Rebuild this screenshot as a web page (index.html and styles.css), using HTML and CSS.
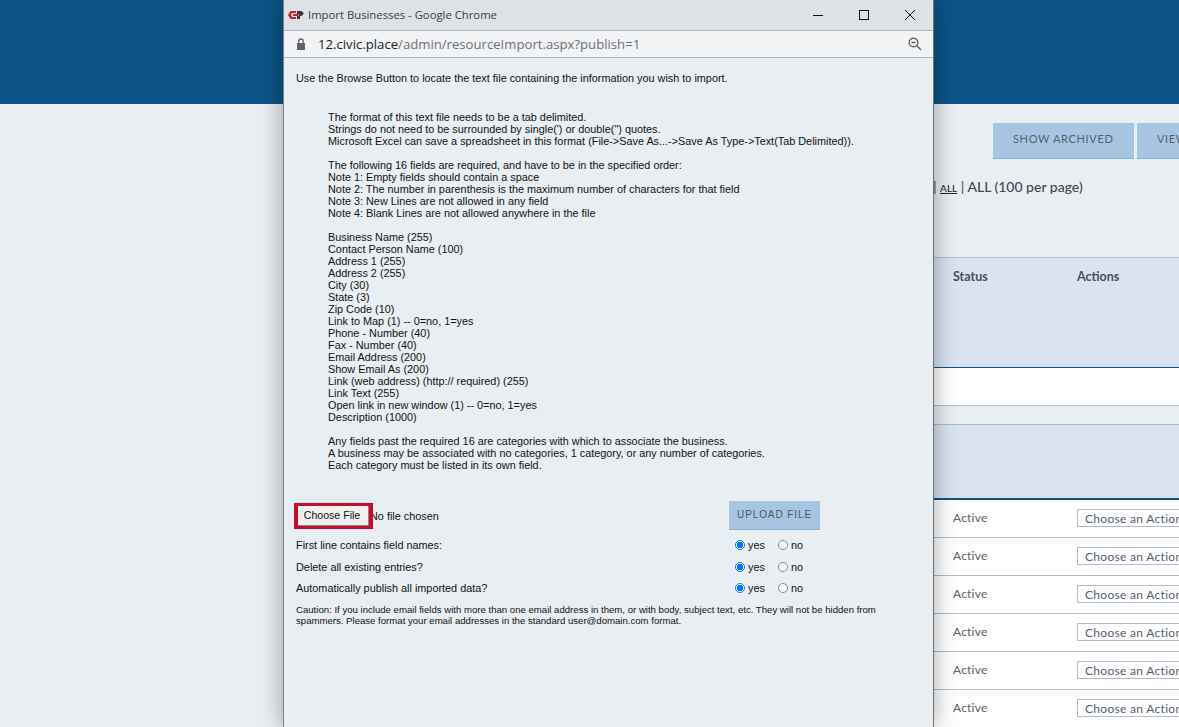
FILE: index.html
```html
<!DOCTYPE html>
<html lang="en">
<head>
<meta charset="utf-8">
<title>Import Businesses</title>
<link rel="stylesheet" href="styles.css">
</head>
<body>
<div class="page">
  <header class="site-header"></header>
  <div class="toolbar">
    <a class="tool-btn">SHOW ARCHIVED</a>
    <a class="tool-btn">VIEW ALL</a>
  </div>
  <div class="pager"><span class="sep">|</span> <a class="pager-link">ALL</a> <span class="sep">|</span> ALL (100 per page)</div>
  <div class="thead thead-first">
    <span></span><span class="th">Status</span><span class="th">Actions</span>
  </div>
  <div class="blank-row"></div>
  <div class="thead thead-second"></div>
  <div class="row"><span></span><span class="status">Active</span><span class="action">Choose an Action</span></div>
  <div class="row"><span></span><span class="status">Active</span><span class="action">Choose an Action</span></div>
  <div class="row"><span></span><span class="status">Active</span><span class="action">Choose an Action</span></div>
  <div class="row"><span></span><span class="status">Active</span><span class="action">Choose an Action</span></div>
  <div class="row"><span></span><span class="status">Active</span><span class="action">Choose an Action</span></div>
  <div class="row"><span></span><span class="status">Active</span><span class="action">Choose an Action</span></div>
</div>

<div class="popup">
  <div class="titlebar">
    <svg class="logo" viewBox="0 0 16 8" width="16" height="8" aria-hidden="true">
      <path fill="#b3262e" d="M2.500 0H8v2H4L3 3.500 4 6h4v2H2.500L0 4z"/>
      <path fill="#b3262e" d="M5 3h5v2H5z"/>
      <path fill="#3b3b3b" d="M9 0h4.500L16 2.500 13.500 5H12v3H9V5h1.500V3H9z"/>
    </svg>
    <span class="wintitle">Import Businesses - Google Chrome</span>
    <div class="winbtns">
      <svg width="12" height="12" viewBox="0 0 12 12" aria-hidden="true"><path d="M1 6.500h10" stroke="#111" fill="none"/></svg>
      <svg width="12" height="12" viewBox="0 0 12 12" aria-hidden="true"><rect x="1.500" y="1.500" width="9" height="9" stroke="#111" fill="none"/></svg>
      <svg width="12" height="12" viewBox="0 0 12 12" aria-hidden="true"><path d="M1 1l10 10M11 1L1 11" stroke="#111" fill="none"/></svg>
    </div>
  </div>
  <div class="addressbar">
    <svg class="lock" width="10" height="12" viewBox="0 0 10 12" aria-hidden="true"><path fill="#5f6368" d="M1 5h8v7H1z"/><path fill="none" stroke="#5f6368" stroke-width="1.300" d="M2.800 5V3.200a2.200 2.200 0 0 1 4.400 0V5"/></svg>
    <span class="url"><span class="host">12.civic.place</span>/admin/resourceImport.aspx?publish=1</span>
    <svg class="zoom-icon" width="14" height="14" viewBox="0 0 14 14" aria-hidden="true"><circle cx="5.500" cy="5.500" r="4.300" fill="none" stroke="#5f6368" stroke-width="1.400"/><path d="M3.500 5.500h4M8.800 8.800L13 13" stroke="#5f6368" stroke-width="1.400" fill="none"/></svg>
  </div>
  <div class="content">
    <p class="intro">Use the Browse Button to locate the text file containing the information you wish to import.</p>
    <div class="notes">
      <p>The format of this text file needs to be a tab delimited.<br>Strings do not need to be surrounded by single(') or double(") quotes.<br>Microsoft Excel can save a spreadsheet in this format (File-&gt;Save As...-&gt;Save As Type-&gt;Text(Tab Delimited)).</p>
      <p>The following 16 fields are required, and have to be in the specified order:<br>Note 1: Empty fields should contain a space<br>Note 2: The number in parenthesis is the maximum number of characters for that field<br>Note 3: New Lines are not allowed in any field<br>Note 4: Blank Lines are not allowed anywhere in the file</p>
      <p>Business Name (255)<br>Contact Person Name (100)<br>Address 1 (255)<br>Address 2 (255)<br>City (30)<br>State (3)<br>Zip Code (10)<br>Link to Map (1) -- 0=no, 1=yes<br>Phone - Number (40)<br>Fax - Number (40)<br>Email Address (200)<br>Show Email As (200)<br>Link (web address) (http:// required) (255)<br>Link Text (255)<br>Open link in new window (1) -- 0=no, 1=yes<br>Description (1000)</p>
      <p>Any fields past the required 16 are categories with which to associate the business.<br>A business may be associated with no categories, 1 category, or any number of categories.<br>Each category must be listed in its own field.</p>
    </div>
    <div class="upload-row">
      <div class="file-field"><span class="choose">Choose File</span><span class="nofile">No file chosen</span></div>
      <a class="upload-btn">UPLOAD FILE</a>
    </div>
    <div class="opt opt-a"><span>First line contains field names:</span><div class="radios"><span class="radio on"></span><span class="lbl">yes</span><span class="radio"></span><span class="lbl">no</span></div></div>
    <div class="opt"><span>Delete all existing entries?</span><div class="radios"><span class="radio on"></span><span class="lbl">yes</span><span class="radio"></span><span class="lbl">no</span></div></div>
    <div class="opt"><span>Automatically publish all imported data?</span><div class="radios"><span class="radio on"></span><span class="lbl">yes</span><span class="radio"></span><span class="lbl">no</span></div></div>
    <p class="caution">Caution: If you include email fields with more than one email address in them, or with body, subject text, etc. They will not be hidden from spammers. Please format your email addresses in the standard user@domain.com format.</p>
  </div>
</div>
</body>
</html>
```
FILE: styles.css
```css
* { box-sizing: border-box; }
html, body { margin: 0; height: 100%; overflow: hidden; }
body { background: #e9eef2; font-family: Lato, "Open Sans", sans-serif; color: #4a4f57; }
p { margin: 0; }

.page { width: 1179px; height: 727px; overflow: hidden; }
.site-header { height: 104px; background: #0c5487; }
.toolbar { display: flex; gap: 3px; padding: 19px 0 0 993px; height: 55px; white-space: nowrap; }
.tool-btn { flex: none; width: 141px; height: 36px; background: #a7c5e3; border-bottom: 1px solid #8fafcf; color: #55606d; font-size: 11px; letter-spacing: .65px; padding-left: 20px; line-height: 32px; }
.tool-btn + .tool-btn { width: 120px; }
.pager { height: 98px; padding: 18px 0 0 933px; font-size: 14px; font-weight: 500; color: #43474e; line-height: 20px; white-space: nowrap; }
.pager-link { font-size: 10px; color: #222; text-decoration: underline; }
.sep { color: #555; }
.thead { margin-left: 500px; background: #d9e4f0; border-top: 1px solid #b0bccb; display: grid; grid-template-columns: 453px 124px 1fr; }
.thead-first { height: 111px; border-bottom: 1px solid #0c5487; padding-top: 12px; }
.th { font-size: 12.5px; font-weight: 700; color: #4a4f57; line-height: 14px; }
.blank-row { margin-left: 500px; height: 38px; background: #fff; border-bottom: 1px solid #b0bccb; margin-bottom: 18px; }
.thead-second { height: 76px; border-bottom: 2px solid #0c5487; }
.row { margin-left: 500px; height: 38px; padding-bottom: 2px; background: #fff; border-bottom: 1px solid #b0bccb; display: grid; grid-template-columns: 453px 124px 1fr; align-items: center; font-size: 12px; color: #55606d; }
.status { letter-spacing: .2px; }
.action { display: block; width: 130px; height: 18px; border: 1px solid #b0bccb; padding-left: 7px; line-height: 17px; letter-spacing: .3px; white-space: nowrap; }

.popup { position: absolute; left: 283px; top: 0; width: 651px; height: 727px; background: #e9eef2; border-left: 1px solid #7d8084; border-right: 1px solid #6f7276; box-shadow: 0 0 22px rgba(0, 0, 0, .35); font-family: "Liberation Sans", Arial, sans-serif; color: #111; }
.titlebar { height: 31px; padding: 0 0 1px 4px; background: #dee1e6; border-bottom: 1px solid #b5b7ba; display: flex; align-items: center; }
.logo { flex: none; }
.wintitle { margin-left: 4px; font-family: "Open Sans", sans-serif; font-size: 11.3px; color: #3c4043; }
.winbtns { margin-left: auto; display: flex; gap: 34px; padding-right: 17px; }
.addressbar { height: 27px; background: #f2f3f5; border-bottom: 1px solid #b5b7ba; display: flex; align-items: center; padding: 0 11px 0 12px; }
.url { margin-left: 12px; font-family: "Open Sans", sans-serif; font-size: 13.15px; color: #6b7076; }
.host { color: #202124; }
.zoom-icon { margin-left: auto; }
.content { padding: 14px 12px 0 12px; font-size: 10.87px; line-height: 12px; }
.intro { margin-bottom: 27px; }
.notes { padding-left: 32px; }
.notes p { margin-bottom: 12px; }
.upload-row { display: flex; align-items: center; margin-top: 30px; height: 29px; }
.file-field { display: flex; align-items: center; width: 433px; }
.choose { position: relative; z-index: 1; display: block; flex: none; margin-left: -2px; width: 79px; height: 26px; padding-right: 3px; border: 4px solid #c40d2e; border-top-width: 3px; border-bottom-width: 3px; background: #f0f0f0; font-size: 10.6px; text-align: center; line-height: 19px; box-shadow: inset -1px -1px 0 #888; }
.nofile { margin-left: -3px; }
.upload-btn { width: 91px; height: 29px; background: #a7c5e3; border-bottom: 1px solid #8fafcf; color: #4e5864; font-size: 10px; letter-spacing: .9px; text-align: center; line-height: 27px; }
.opt { display: flex; justify-content: space-between; height: 21.500px; align-items: center; }
.opt-a { margin-top: 4.500px; }
.radios { display: flex; align-items: center; width: 186px; }
.radio { width: 10px; height: 10px; border-radius: 50%; border: 1px solid #8a8a8a; background: #fff; margin-right: 3px; }
.radio.on { border: 1px solid #0075ff; background: radial-gradient(circle, #0075ff 0 3px, #fff 3.500px); }
.lbl { width: 30px; }
.caution { margin-top: 4.500px; font-size: 9.6px; line-height: 11px; width: 600px; }
```
